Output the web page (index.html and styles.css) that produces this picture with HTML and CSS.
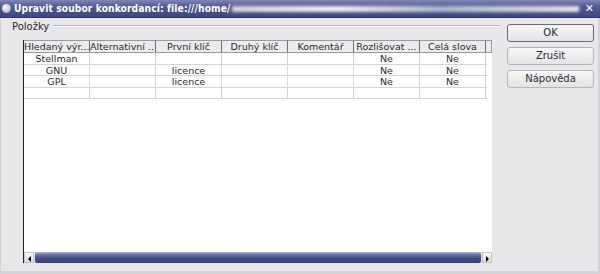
FILE: index.html
```html
<!DOCTYPE html>
<html lang="cs">
<head>
  <meta charset="UTF-8" />
  <title>Upravit soubor konkordancí</title>
  <link rel="stylesheet" href="styles.css">
</head>
<body>
  <div class="window">
    <div class="titlebar">
      <span class="title-icon"></span>
      <span class="title-text">Upravit soubor konkordancí: file:///home/</span>
      <span class="title-smudge"></span>
      <span class="title-close">&#x2715;</span>
    </div>
    <div class="content">
      <div class="entries">
        <div class="group-label"><span>Položky</span><span class="group-line"></span></div>
        <div class="table-box">
          <div class="table">
            <div class="row head">
              <div class="cell">Hledaný výr...</div>
              <div class="cell">Alternativní ...</div>
              <div class="cell">První klíč</div>
              <div class="cell">Druhý klíč</div>
              <div class="cell">Komentář</div>
              <div class="cell">Rozlišovat ...</div>
              <div class="cell">Celá slova</div>
              <div class="cell filler"></div>
            </div>
            <div class="row">
              <div class="cell">Stellman</div><div class="cell"></div><div class="cell"></div><div class="cell"></div>
              <div class="cell"></div><div class="cell">Ne</div><div class="cell">Ne</div>
            </div>
            <div class="row">
              <div class="cell">GNU</div><div class="cell"></div><div class="cell">licence</div><div class="cell"></div>
              <div class="cell"></div><div class="cell">Ne</div><div class="cell">Ne</div>
            </div>
            <div class="row">
              <div class="cell">GPL</div><div class="cell"></div><div class="cell">licence</div><div class="cell"></div>
              <div class="cell"></div><div class="cell">Ne</div><div class="cell">Ne</div>
            </div>
            <div class="row">
              <div class="cell"></div><div class="cell"></div><div class="cell"></div><div class="cell"></div>
              <div class="cell"></div><div class="cell"></div><div class="cell"></div>
            </div>
          </div>
          <div class="hscroll">
            <div class="arrow left"></div>
            <div class="thumb"></div>
            <div class="arrow right"></div>
          </div>
        </div>
      </div>
      <div class="buttons">
        <div class="btn default">OK</div>
        <div class="btn">Zrušit</div>
        <div class="btn">Nápověda</div>
      </div>
    </div>
  </div>
</body>
</html>
```

FILE: styles.css
```css
body {
  margin: 0;
  width: 600px;
  height: 274px;
  overflow: hidden;
  background: #e8e8ea;
  font-family: "DejaVu Sans", sans-serif;
  color: #2a2a2a;
}
.window {
  height: 274px;
  display: flex;
  flex-direction: column;
}
/* title bar */
.titlebar {
  height: 18px;
  display: flex;
  align-items: center;
  background: linear-gradient(#8086b6, #555d94 35%, #474f87 70%, #3f477e);
  border-bottom: 1px solid #30365f;
  box-sizing: border-box;
  overflow: hidden;
}
.title-icon {
  width: 9px;
  height: 9px;
  margin: 0 3px 0 2px;
  border-radius: 50%;
  background: radial-gradient(circle at 35% 35%, #ffffff, #c8c8d4 55%, #7a7a90);
}
.title-text {
  color: #fff;
  font-family: "DejaVu Sans Condensed", "DejaVu Sans", sans-serif;
  font-weight: bold;
  font-size: 10.2px;
  letter-spacing: 0.1px;
  white-space: nowrap;
}
.title-smudge {
  flex: 1;
  height: 6px;
  margin: 0 6px 0 2px;
  background: linear-gradient(90deg, #d4d4dc, #eeeef2 30%, #b0b4cc 60%, #e2e2e8);
  filter: blur(1.5px);
}
.title-close {
  color: #fff;
  font-size: 11px;
  font-weight: bold;
  margin-right: 6px;
}
/* body */
.content {
  flex: 1;
  display: flex;
  border-left: 1px solid #d0d0d4;
  border-right: 2px solid #d4d4d8;
  border-bottom: 3px solid #d4d4d8;
}
.entries {
  width: 491px;
  display: flex;
  flex-direction: column;
}
.group-label {
  display: flex;
  align-items: center;
  height: 16px;
  padding-left: 11px;
  font-size: 10px;
}
.group-line {
  flex: 1;
  margin-left: 4px;
  margin-right: -9px;
  border-top: 1px solid #b8b8bc;
  border-bottom: 1px solid #fafafa;
}
.table-box {
  margin: 6px 0 8px 22px;
  flex: 1;
  background: #fff;
  border-left: 1px solid #202020;
  display: flex;
  flex-direction: column;
}
.table {
  flex: 1;
  font-size: 9.5px;
}
.row {
  display: flex;
  height: 11.6px;
  box-sizing: border-box;
  border-bottom: 1px solid #d4d4d4;
  width: 463px;
}
.row .cell {
  width: 66px;
  box-sizing: border-box;
  border-right: 1px solid #d4d4d4;
  text-align: center;
  line-height: 11px;
  white-space: nowrap;
  overflow: hidden;
}
.row.head {
  height: 13px;
  width: 468px;
  background: #ececee;
  border-top: 1px solid #9a9a9e;
  border-bottom: 1px solid #9a9a9e;
}
.row.head .cell {
  border-right: 1px solid #707074;
  line-height: 11px;
}
.row.head .filler {
  width: 6px;
  border-right: 1px solid #9a9a9e;
}
/* horizontal scrollbar */
.hscroll {
  height: 11px;
  display: flex;
  width: 468px;
  background: #e0e0e4;
}
.arrow {
  width: 10px;
  background: linear-gradient(#fafafa, #dcdce0);
  border: 1px solid #c4c4c8;
  box-sizing: border-box;
  position: relative;
}
.arrow::after {
  content: "";
  position: absolute;
  top: 3px;
  left: 3px;
  border-top: 3px solid transparent;
  border-bottom: 3px solid transparent;
}
.arrow.left::after { border-right: 3px solid #000; }
.arrow.right::after { border-left: 3px solid #000; }
.thumb {
  flex: 1;
  margin: 0 1px;
  border-radius: 2px;
  background: linear-gradient(#b4b8d4, #6a70a2 25%, #424a80 60%, #3c4276);
}
/* dialog buttons */
.buttons {
  flex: 1;
  display: flex;
  flex-direction: column;
  gap: 5px;
  padding: 6px 4px 0 15px;
}
.btn {
  height: 18px;
  box-sizing: border-box;
  border: 1px solid #b4b4ba;
  border-radius: 3px;
  background: linear-gradient(#f8f8f8, #e2e2e4);
  font-size: 10px;
  text-align: center;
  line-height: 16px;
}
.btn.default {
  border-color: #6a6a72;
}
```
